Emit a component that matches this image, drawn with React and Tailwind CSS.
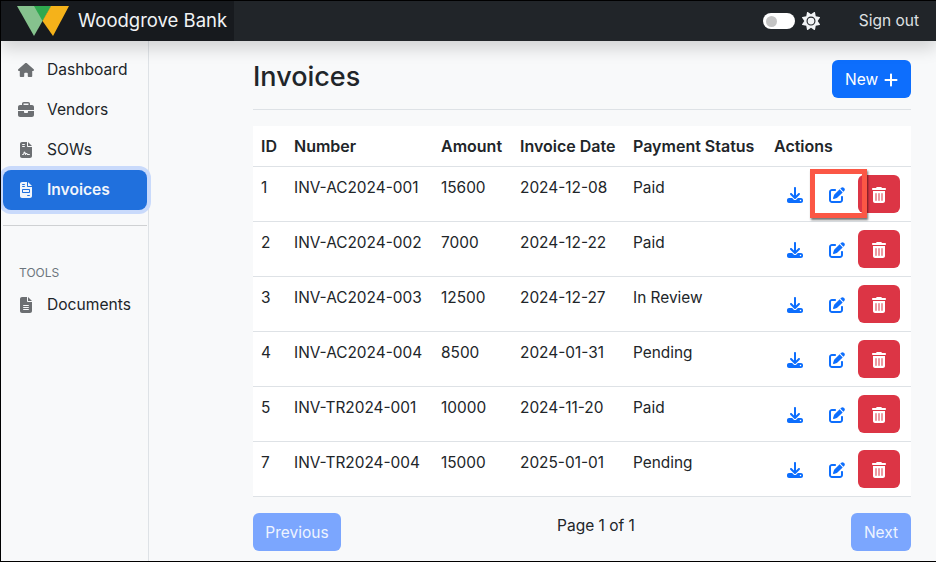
import { FaHouse, FaBriefcase, FaFileContract, FaFileInvoice, FaFileLines, FaPlus, FaDownload, FaPenToSquare, FaTrashCan, FaSun } from 'react-icons/fa6'

const NAV = [
  { label: 'Dashboard', icon: FaHouse },
  { label: 'Vendors', icon: FaBriefcase },
  { label: 'SOWs', icon: FaFileContract },
  { label: 'Invoices', icon: FaFileInvoice, active: true },
]

const INVOICES = [
  { id: 1, number: 'INV-AC2024-001', amount: 15600, date: '2024-12-08', status: 'Paid' },
  { id: 2, number: 'INV-AC2024-002', amount: 7000, date: '2024-12-22', status: 'Paid' },
  { id: 3, number: 'INV-AC2024-003', amount: 12500, date: '2024-12-27', status: 'In Review' },
  { id: 4, number: 'INV-AC2024-004', amount: 8500, date: '2024-01-31', status: 'Pending' },
  { id: 5, number: 'INV-TR2024-001', amount: 10000, date: '2024-11-20', status: 'Paid' },
  { id: 7, number: 'INV-TR2024-004', amount: 15000, date: '2025-01-01', status: 'Pending' },
]

function Logo() {
  return (
    <svg width="52" height="31" viewBox="0 0 52 31">
      <polygon points="0,0 34,0 17,30" fill="#86c28e" />
      <polygon points="17,0 34,0 25.5,15" fill="#2fa84f" />
      <polygon points="34,0 52,0 36,30 25.5,15" fill="#f5b21a" />
    </svg>
  )
}

function NavItem({ label, icon: Icon, active }) {
  return (
    <a className={`flex items-center h-10 ml-[2px] mr-[1px] pl-[15px] text-[15.6px] ${active ? 'rounded-lg bg-[#2070dd] text-[#f1f5fb] font-semibold ring-4 ring-[#c9dafb]' : 'text-[#212529]'}`}>
      <span className="w-[29px] shrink-0">
        <Icon className={`h-[16px] w-auto ${active ? 'text-[#f1f5fb]' : 'text-[#6c6f72]'}`} />
      </span>
      {label}
    </a>
  )
}

function Row({ inv, highlight }) {
  return (
    <tr className="h-[55px] border-b border-[#dee2e6] align-top text-[15.4px]">
      <td className="pl-2 pt-[9px]">{inv.id}</td>
      <td className="pl-2 pt-[9px]">{inv.number}</td>
      <td className="pl-2 pt-[9px]">{inv.amount}</td>
      <td className="pl-2 pt-[9px]">{inv.date}</td>
      <td className="pl-2 pt-[9px]">{inv.status}</td>
      <td className="pt-[8px] pr-[11px]">
        <div className="flex items-center justify-end">
          <button className="w-[42px] h-[38px] pt-[2px] flex items-center justify-center text-[#0d6efd]">
            <FaDownload size={16} />
          </button>
          <span className="relative w-[42px] h-[38px] pt-[2px] flex items-center justify-center text-[#0d6efd]">
            {highlight && (
              <span className="absolute left-[-6px] top-[-6px] w-[57px] h-[49px] border-[5px] border-[#fb5745] shadow-[1px_2px_2px_rgba(0,0,0,0.55)] z-10" />
            )}
            <FaPenToSquare size={16} className="relative z-20" />
          </span>
          <button className="w-[42px] h-[38px] pt-[2px] rounded-md bg-[#dc3545] text-white flex items-center justify-center">
            <FaTrashCan size={16} />
          </button>
        </div>
      </td>
    </tr>
  )
}

export default function App() {
  return (
    <div className="w-[936px] h-[562px] overflow-hidden flex flex-col bg-[#f8f9fa] text-[#212529] border border-black border-r-0 font-['Inter',sans-serif] text-[16px]">
      {/* Navbar */}
      <header className="relative z-10 h-[40px] shrink-0 flex items-center bg-[#212529] shadow-[0_8px_16px_rgba(0,0,0,0.15)]">
        <div className="w-[233px] h-full flex items-center pl-[16px] bg-[#171a1e]">
          <Logo />
          <span className="ml-[9px] text-[18.5px] text-[#f1f3f5]">Woodgrove Bank</span>
        </div>
        <div className="ml-auto flex items-center pr-[17px]">
          <span className="flex items-center w-[32px] h-[16px] rounded-full bg-white pl-[3px]">
            <span className="w-[11px] h-[11px] rounded-full bg-[#c4c4c4]" />
          </span>
          <FaSun size={18} className="ml-[7px] text-[#f1f3f5]" />
          <span className="ml-[39px] text-[15.5px] text-[#dfe1e3]">Sign out</span>
        </div>
      </header>

      <div className="flex flex-1 min-h-0">
        {/* Sidebar */}
        <aside className="w-[148px] shrink-0 border-r border-[#dee2e6] pt-[9px]">
          <nav className="flex flex-col">
            {NAV.map(item => <NavItem key={item.label} {...item} />)}
          </nav>
          <hr className="ml-[2px] mr-[1px] mt-[15px] border-[#cfd1d3]" />
          <p className="mt-[40px] pl-[18px] text-[12px] leading-[14px] text-[#6c757d]">TOOLS</p>
          <div className="mt-[5px]">
            <NavItem label="Documents" icon={FaFileLines} />
          </div>
        </aside>

        {/* Main */}
        <main className="flex-1 pl-[104px] pr-[25px]">
          <div className="flex items-start justify-between h-[69px] border-b border-[#dee2e6] pt-[19px]">
            <h1 className="text-[27px] leading-[34px] font-medium">Invoices</h1>
            <button className="flex items-center w-[79px] h-[38px] pl-[13px] pt-[1px] rounded-md bg-[#0d6efd] text-white text-[15.5px]">
              New
              <FaPlus size={16} className="ml-[5px]" />
            </button>
          </div>

          <table className="mt-[16px] w-full bg-white border-collapse">
            <thead>
              <tr className="h-[40px] border-b border-[#dee2e6] font-semibold text-left">
                <th className="pl-2 w-[33px] font-semibold">ID</th>
                <th className="pl-2 w-[147px] font-semibold">Number</th>
                <th className="pl-2 w-[79px] font-semibold">Amount</th>
                <th className="pl-2 w-[113px] font-semibold">Invoice Date</th>
                <th className="pl-2 w-[141px] font-semibold">Payment Status</th>
                <th className="pl-2 font-semibold">Actions</th>
              </tr>
            </thead>
            <tbody>
              {INVOICES.map((inv, i) => <Row key={inv.id} inv={inv} highlight={i === 0} />)}
            </tbody>
          </table>

          <div className="mt-[16px] flex justify-between items-start text-[15.5px]">
            <button className="w-[88px] h-[38px] pt-[2px] rounded-md bg-[#7ba6fe] text-[#eef4ff]">Previous</button>
            <span className="mt-[1px]">Page 1 of 1</span>
            <button className="w-[60px] h-[38px] pt-[2px] rounded-md bg-[#7ba6fe] text-[#eef4ff]">Next</button>
          </div>
        </main>
      </div>
    </div>
  )
}
